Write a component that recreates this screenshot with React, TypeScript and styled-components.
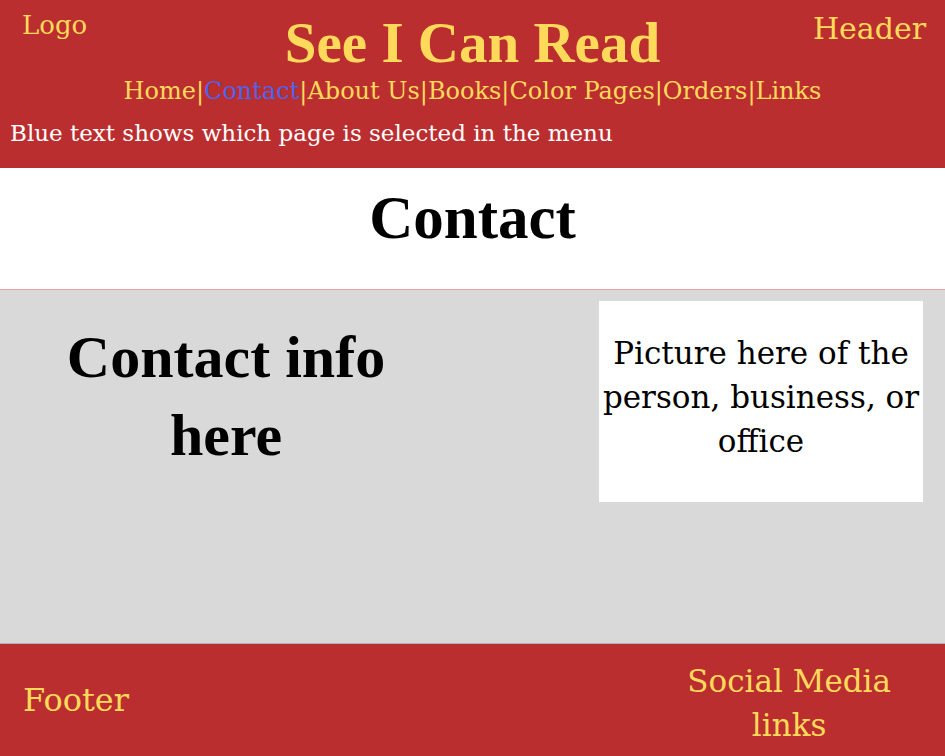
import React from "react";
import styled, { createGlobalStyle } from "styled-components";

const RED = "#bb2e30";
const YELLOW = "#ffda5a";
const BLUE = "#4f63e6";
const BODY = `"DejaVu Serif", "Liberation Serif", serif`;
const DISPLAY = `"Liberation Serif", "DejaVu Serif", serif`;

const Global = createGlobalStyle`
  html, body { margin: 0; padding: 0; }
  body { font-family: ${BODY}; background: #fff; }
  * { box-sizing: border-box; }
`;

const Page = styled.div`
  width: 945px;
  height: 756px;
  display: flex;
  flex-direction: column;
  overflow: hidden;
`;

const Header = styled.header`
  background: ${RED};
  height: 168px;
  display: grid;
  grid-template-columns: 1fr auto 1fr;
  grid-template-rows: auto auto 1fr;
  padding: 8px 19px 0 19px;
`;

const Corner = styled.div<{ $align: "left" | "right" }>`
  color: ${YELLOW};
  font-family: ${BODY};
  font-size: ${(p) => (p.$align === "left" ? "26px" : "30px")};
  line-height: 34px;
  justify-self: ${(p) => (p.$align === "left" ? "start" : "end")};
  padding-left: ${(p) => (p.$align === "left" ? "3px" : "0")};
  padding-top: ${(p) => (p.$align === "left" ? "0" : "4px")};
`;

const Title = styled.h1`
  margin: 6px 0 0;
  color: ${YELLOW};
  font-family: ${DISPLAY};
  font-size: 57px;
  line-height: 58px;
  font-weight: 700;
  text-align: center;
`;

const Nav = styled.nav`
  grid-column: 1 / -1;
  text-align: center;
  color: ${YELLOW};
  font-size: 24px;
  line-height: 32px;
  margin-top: 3px;
`;

const NavItem = styled.span<{ $active?: boolean }>`
  color: ${(p) => (p.$active ? BLUE : YELLOW)};
`;

const Note = styled.div`
  grid-column: 1 / -1;
  color: #fff;
  font-size: 23px;
  line-height: 28px;
  margin: 12px 0 0 -9px;
`;

const Band = styled.section`
  height: 122px;
  background: #fff;
  border-bottom: 1px solid #e6a3a3;
  display: flex;
  justify-content: center;
  align-items: flex-start;
`;

const PageTitle = styled.h2`
  margin: 20px 0 0;
  font-family: ${DISPLAY};
  font-size: 61px;
  line-height: 60px;
  font-weight: 700;
  color: #000;
`;

const Main = styled.main`
  flex: 1;
  background: #d9d9d9;
  border-bottom: 1px solid #b3b3b3;
  display: flex;
  justify-content: space-between;
  padding: 11px 22px 0 0;
`;

const InfoBlock = styled.div`
  width: 452px;
  text-align: center;
  font-family: ${DISPLAY};
  font-size: 60px;
  line-height: 78px;
  font-weight: 700;
  color: #000;
  padding-top: 17px;
`;

const PictureBox = styled.div`
  width: 324px;
  height: 201px;
  background: #fff;
  display: flex;
  justify-content: center;
  padding-top: 30px;
  text-align: center;
  font-size: 31px;
  line-height: 44px;
  white-space: nowrap;
  color: #000;
`;

const Footer = styled.footer`
  height: 112px;
  background: ${RED};
  display: flex;
  justify-content: space-between;
  align-items: flex-start;
  padding: 0 54px 0 23px;
`;

const FooterLabel = styled.div`
  color: ${YELLOW};
  font-size: 32px;
  line-height: 44px;
  margin-top: 34px;
`;

const Social = styled.div`
  color: ${YELLOW};
  font-size: 31px;
  line-height: 44px;
  text-align: center;
  margin-top: 15px;
`;

const navItems = ["Home", "Contact", "About Us", "Books", "Color Pages", "Orders", "Links"];

export default function App() {
  return (
    <>
      <Global />
      <Page>
        <Header>
          <Corner $align="left">Logo</Corner>
          <Title>See I Can Read</Title>
          <Corner $align="right">Header</Corner>
          <Nav>
            {navItems.map((n, i) => (
              <React.Fragment key={n}>
                {i > 0 && "|"}
                <NavItem $active={n === "Contact"}>{n}</NavItem>
              </React.Fragment>
            ))}
          </Nav>
          <Note>Blue text shows which page is selected in the menu</Note>
        </Header>
        <Band>
          <PageTitle>Contact</PageTitle>
        </Band>
        <Main>
          <InfoBlock>
            Contact info
            <br />
            here
          </InfoBlock>
          <PictureBox>
            Picture here of the
            <br />
            person, business, or
            <br />
            office
          </PictureBox>
        </Main>
        <Footer>
          <FooterLabel>Footer</FooterLabel>
          <Social>
            Social Media
            <br />
            links
          </Social>
        </Footer>
      </Page>
    </>
  );
}
